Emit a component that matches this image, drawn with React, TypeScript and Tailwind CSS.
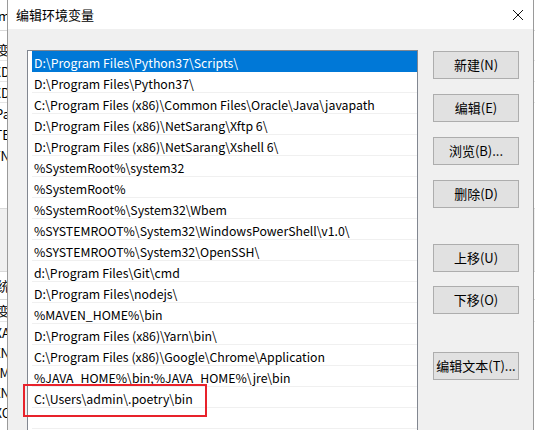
import React from 'react';

const paths = [
  'D:\\Program Files\\Python37\\Scripts\\',
  'D:\\Program Files\\Python37\\',
  'C:\\Program Files (x86)\\Common Files\\Oracle\\Java\\javapath',
  'D:\\Program Files (x86)\\NetSarang\\Xftp 6\\',
  'D:\\Program Files (x86)\\NetSarang\\Xshell 6\\',
  '%SystemRoot%\\system32',
  '%SystemRoot%',
  '%SystemRoot%\\System32\\Wbem',
  '%SYSTEMROOT%\\System32\\WindowsPowerShell\\v1.0\\',
  '%SYSTEMROOT%\\System32\\OpenSSH\\',
  'd:\\Program Files\\Git\\cmd',
  'D:\\Program Files\\nodejs\\',
  '%MAVEN_HOME%\\bin',
  'D:\\Program Files (x86)\\Yarn\\bin\\',
  'C:\\Program Files (x86)\\Google\\Chrome\\Application',
  '%JAVA_HOME%\\bin;%JAVA_HOME%\\jre\\bin',
  'C:\\Users\\admin\\.poetry\\bin',
  '',
];

// buttons on the right, mt = gap above each one
const buttons = [
  { label: '新建(N)', mt: 'mt-0' },
  { label: '编辑(E)', mt: 'mt-[15px]' },
  { label: '浏览(B)...', mt: 'mt-[15px]' },
  { label: '删除(D)', mt: 'mt-[15px]' },
  { label: '上移(U)', mt: 'mt-[36px]' },
  { label: '下移(O)', mt: 'mt-[14px]' },
  { label: '编辑文本(T)...', mt: 'mt-[38px]' },
];

const font = { fontFamily: '"Noto Sans CJK SC", "Noto Sans", sans-serif' };

function BackWindow() {
  // the window behind the dialog, only a sliver on the left shows
  const rows = [
    { t: 'Com', cls: 'h-[31px] border-b border-[#d9d9d9]' },
    { t: '', cls: 'h-[8px]' },
    { t: '环变', cls: 'h-[22px] border-b border-[#e5e5e5]' },
    { t: 'XD', cls: 'h-[21px] border-b border-[#e5e5e5]' },
    { t: 'XD', cls: 'h-[21px] border-b border-[#e5e5e5]' },
    { t: 'XPa', cls: 'h-[21px]' },
    { t: 'XTE', cls: 'h-[21px]' },
    { t: 'XTN', cls: 'h-[21px]' },
    { t: '', cls: 'h-[43px] border-b border-[#d9d9d9]' },
    { t: '', cls: 'h-[63px] bg-[#f0f0f0] border-b border-[#d9d9d9]' },
    { t: '系统', cls: 'h-[28px] border-b border-[#d9d9d9]' },
    { t: '环变', cls: 'h-[22px] border-b border-[#e5e5e5]' },
    { t: 'XA', cls: 'h-[20px]' },
    { t: 'XN', cls: 'h-[20px]' },
    { t: 'XM', cls: 'h-[20px]' },
    { t: 'XN', cls: 'h-[20px]' },
    { t: 'XC', cls: 'h-[20px]' },
  ];
  return (
    <div className="flex h-full w-full flex-col bg-white text-[13px] text-black" style={font}>
      {rows.map((r, i) => (
        <div key={i} className={`flex items-center justify-end overflow-hidden pr-[525px] ${r.cls}`}>
          <span className="whitespace-nowrap leading-none">{r.t}</span>
        </div>
      ))}
    </div>
  );
}

export default function App() {
  return (
    <div className="relative h-[430px] w-[535px] overflow-hidden bg-white">
      <BackWindow />

      {/* dialog window */}
      <div
        className="absolute left-[7px] top-0 flex h-[450px] w-[527px] flex-col border-x border-[#9a9a9a] bg-[#f0f0f0]"
        style={font}
      >
        <div className="flex h-[31px] items-center justify-between bg-white pl-[8px] pr-[8px]">
          <span className="text-[13px] text-black">编辑环境变量</span>
          <svg width="12" height="12" viewBox="0 0 12 12" className="mr-[1px]">
            <path d="M1 1 L11 11 M11 1 L1 11" stroke="#111" strokeWidth="1" fill="none" />
          </svg>
        </div>

        <div className="flex pl-[19px] pt-[21px]">
          {/* path list */}
          <div className="relative h-[400px] w-[391px] border border-[#828790] bg-white pl-[4px] pt-0">
            {paths.map((p, i) => (
              <div
                key={i}
                className={`flex h-[21px] items-start pl-[2px] pt-[6px] text-[12.3px] leading-none ${
                  i === 0 ? 'bg-[#0078d7] text-white' : 'border-b border-[#f0f0f0] text-black'
                }`}
              >
                <span className="whitespace-nowrap">{p}</span>
              </div>
            ))}
            {/* red highlight */}
            <div className="absolute left-[-5px] top-[333px] h-[33px] w-[184px] border-2 border-[#e8222b]" />
          </div>

          {/* buttons */}
          <div className="ml-[15px] flex flex-col pt-[1px]">
            {buttons.map(b => (
              <button
                key={b.label}
                className={`flex h-[28px] w-[86px] items-center justify-center border border-[#adadad] bg-[#e1e1e1] text-[13px] text-black ${b.mt}`}
              >
                {b.label}
              </button>
            ))}
          </div>
        </div>
      </div>
    </div>
  );
}
